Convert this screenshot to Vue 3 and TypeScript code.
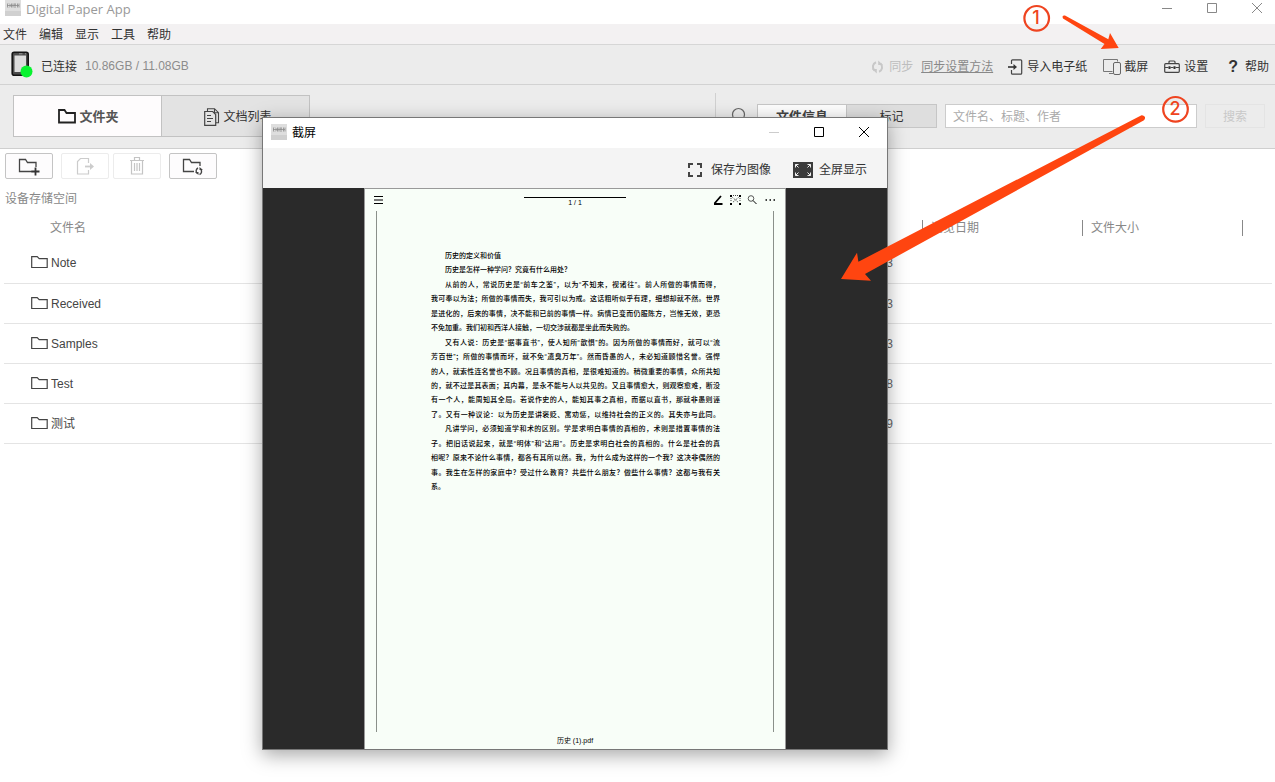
<script setup lang="ts">
import { ref } from 'vue'

interface FolderRow {
  name: string
  date: string
}

interface DocLine {
  text: string
  indent?: boolean
  full?: boolean
}

const menus: string[] = ['文件', '编辑', '显示', '工具', '帮助']
const query = ref('')

const rows: FolderRow[] = [
  { name: 'Note', date: '2019/03/13' },
  { name: 'Received', date: '2019/03/13' },
  { name: 'Samples', date: '2019/03/13' },
  { name: 'Test', date: '2019/03/18' },
  { name: '测试', date: '2019/03/19' },
]

const lines: DocLine[] = [
  { text: '历史的定义和价值', indent: true },
  { text: '历史是怎样一种学问？究竟有什么用处？', indent: true },
  { text: '从前的人，常说历史是“前车之鉴”，以为“不知来，视诸往”。前人所做的事情而得，', indent: true, full: true },
  { text: '我可奉以为法；所做的事情而失，我可引以为戒。这话粗听似乎有理，细想却就不然。世界', full: true },
  { text: '是进化的，后来的事情，决不能和已前的事情一样。病情已变而仍服陈方，岂惟无效，更恐', full: true },
  { text: '不免加重。我们初和西洋人接触，一切交涉就都是坐此而失败的。' },
  { text: '又有人说：历史是“据事直书”，使人知所“歆惧”的。因为所做的事情而好，就可以“流', indent: true, full: true },
  { text: '芳百世”；所做的事情而坏，就不免“遗臭万年”。然而昏愚的人，未必知道顾惜名誉。强悍', full: true },
  { text: '的人，就索性连名誉也不顾。况且事情的真相，是很难知道的。稍微重要的事情，众所共知', full: true },
  { text: '的，就不过是其表面；其内幕，是永不能与人以共见的。又且事情愈大，则观察愈难，断没', full: true },
  { text: '有一个人，能周知其全局。若说作史的人，能知其事之真相，而据以直书，那就非愚则诬', full: true },
  { text: '了。又有一种议论：以为历史是讲褒贬、寓劝惩，以维持社会的正义的。其失亦与此同。', full: true },
  { text: '凡讲学问，必须知道学和术的区别。学是求明白事情的真相的，术则是措置事情的法', indent: true, full: true },
  { text: '子。把旧话说起来，就是“明体”和“达用”。历史是求明白社会的真相的。什么是社会的真', full: true },
  { text: '相呢？原来不论什么事情，都各有其所以然。我，为什么成为这样的一个我？这决非偶然的', full: true },
  { text: '事。我生在怎样的家庭中？受过什么教育？共些什么朋友？做些什么事情？这都与我有关', full: true },
  { text: '系。' },
]
</script>

<template>
  <div class="app">
    <header class="titlebar">
      <svg class="app-icon" width="16" height="16" viewBox="0 0 16 16" aria-hidden="true">
        <rect width="16" height="16" fill="#dedede" />
        <rect y="11" width="16" height="5" fill="#d0d0d0" />
        <path d="M2.5 3.500v4M4 3.500l1 1v2l-1 1M6.500 3.500v4M8 3.500v4M10 3v5M9 5h2M12.500 3.500v4M14 3.500v4M2 5.500h12" fill="none" stroke="#8c8c8c" stroke-width=".8" />
      </svg>
      <h1>Digital Paper App</h1>
      <div class="win-buttons">
        <button type="button" aria-label="最小化"><svg width="12" height="12" viewBox="0 0 12 12"><path d="M1 6.500h10" /></svg></button>
        <button type="button" aria-label="最大化"><svg width="12" height="12" viewBox="0 0 12 12"><path d="M1.500 1.500h9v9h-9z" /></svg></button>
        <button type="button" aria-label="关闭"><svg width="12" height="12" viewBox="0 0 12 12"><path d="M1 1l10 10M11 1L1 11" /></svg></button>
      </div>
    </header>

    <nav class="menubar">
      <button v-for="m in menus" :key="m" type="button">{{ m }}</button>
    </nav>

    <section class="devicebar">
      <svg class="device-icon" width="22" height="28" viewBox="0 0 22 28" aria-hidden="true">
        <rect x="1.200" y="1.200" width="16" height="23" rx="2" fill="#4b4b4b" stroke="#141414" stroke-width="1.600" />
        <rect x="3.500" y="4.500" width="11.500" height="16.500" fill="#dcdcdc" />
        <path d="M8 2.800h3.500M14 2.800h1" stroke="#9a9a9a" />
        <circle cx="15.500" cy="20.500" r="6" fill="#08f22f" />
      </svg>
      <span class="device-state">已连接</span>
      <span class="device-space">10.86GB / 11.08GB</span>
      <div class="actions">
        <button type="button" class="sync" disabled>
          <svg width="14" height="14" viewBox="0 0 14 14" aria-hidden="true">
            <path d="M5 2.200A5 5 0 0 0 3.500 10.500M8 11.800A5 5 0 0 0 9.500 3.500" fill="none" stroke="#c8c8c8" stroke-width="2" />
            <path d="M1 9h4.800v4.500zM12 5H7.200V.5z" fill="#c8c8c8" />
          </svg>同步
        </button>
        <a href="#" class="sync-help">同步设置方法</a>
        <button type="button" class="import">
          <svg width="15" height="16" viewBox="0 0 15 16" aria-hidden="true">
            <path d="M3.500 5V1.800q0-1 1-1h8.200q1 0 1 1v12.400q0 1-1 1H4.500q-1 0-1-1V11" fill="none" stroke="#444" stroke-width="1.200" />
            <path d="M0 8h7" stroke="#333" stroke-width="1.600" /><path d="M5.500 5L9 8l-3.500 3z" fill="#333" />
          </svg>导入电子纸
        </button>
        <button type="button" class="shot">
          <svg width="19" height="18" viewBox="0 0 19 18" aria-hidden="true">
            <path d="M14.500 3.500V1.500H.5v12h9M6 15.500h4" fill="none" stroke="#777" />
            <rect x="10.500" y="4.500" width="7" height="12" rx="1.500" fill="none" stroke="#666" />
          </svg>截屏
        </button>
        <button type="button" class="settings">
          <svg width="16" height="14" viewBox="0 0 16 14" aria-hidden="true">
            <path d="M5 3.500V2q0-1 1-1h4q1 0 1 1v1.500M1.700 3.700h12.600q1 0 1 1v6.600q0 1-1 1H1.700q-1 0-1-1V4.700q0-1 1-1zM.7 7.500h3.800M6.500 7.500h3M11.500 7.500h3.800" fill="none" stroke="#444" stroke-width="1.200" />
            <path d="M4.500 6.200h2v2.800h-2zM9.500 6.200h2v2.800h-2z" fill="#333" />
          </svg>设置
        </button>
        <button type="button" class="help"><b>?</b>帮助</button>
      </div>
    </section>

    <section class="navbar">
      <div class="tabs">
        <button type="button" class="tab active">
          <svg width="18" height="15" viewBox="0 0 18 15" aria-hidden="true"><path d="M1 1h5.500l2 3H17v9.500H1z" fill="none" stroke="#222" stroke-width="1.800" /></svg>文件夹
        </button>
        <button type="button" class="tab">
          <svg width="16" height="18" viewBox="0 0 16 18" aria-hidden="true">
            <path d="M3.500 3V.7h7l4 4v10H12M10.500.7v4h4" fill="none" stroke="#444" stroke-width="1.100" />
            <path d="M.7 3.500h8l3 3v10.800H.7zM3 7.500h4M3 10.500h6M3 13.500h4" fill="#e4e4e4" stroke="#444" stroke-width="1.200" />
          </svg>文档列表
        </button>
      </div>
      <form class="search" @submit.prevent>
        <svg class="magnifier" width="18" height="18" viewBox="0 0 18 18" aria-hidden="true"><circle cx="7.500" cy="7.500" r="6" fill="none" stroke="#666" stroke-width="1.200" /><path d="M12 12l5 5" stroke="#666" stroke-width="1.500" /></svg>
        <div class="segments">
          <button type="button" class="on">文件信息</button>
          <button type="button">标记</button>
        </div>
        <input v-model="query" type="text" aria-label="搜索关键词" placeholder="文件名、标题、作者" />
        <button type="submit" class="go" disabled>搜索</button>
      </form>
    </section>

    <main>
      <div class="tools">
        <button type="button" aria-label="新建文件夹">
          <svg width="24" height="20" viewBox="0 0 24 20"><path d="M15 15.500H2.500v-12h6l2 3h8.500V11" fill="none" stroke="#444" stroke-width="1.300" /><path d="M18.500 11.500v8M14.500 15.500h8" stroke="#333" stroke-width="1.800" /></svg>
        </button>
        <button type="button" class="gap off" aria-label="移动" disabled>
          <svg width="24" height="20" viewBox="0 0 24 20"><path d="M15.500 7V2.500h-8l-3 3v12.500h11V14" fill="none" stroke="#ccc" stroke-width="1.200" /><path d="M12 10.500h6" stroke="#ccc" stroke-width="1.800" /><path d="M17 7l4 3.500-4 3.500z" fill="#ccc" /></svg>
        </button>
        <button type="button" class="off" aria-label="删除" disabled>
          <svg width="24" height="20" viewBox="0 0 24 20"><path d="M5 4.500h14M9.500 4V1.500h5V4M6.500 5v13h11V5M9.500 7v8M12 7v8M14.500 7v8" fill="none" stroke="#c4c4c4" stroke-width="1.200" /></svg>
        </button>
        <button type="button" class="gap" aria-label="刷新文件夹">
          <svg width="24" height="20" viewBox="0 0 24 20"><path d="M13 15.500H2.500v-12h6l2 3h8.500V10" fill="none" stroke="#444" stroke-width="1.300" /><path d="M17 12a3.300 3.300 0 0 0-1 5.200M18.500 18.500a3.300 3.300 0 0 0 1-5.500" fill="none" stroke="#444" stroke-width="1.400" /><path d="M14 16h3.500v3zM22 14h-3.500v-3z" fill="#444" /></svg>
        </button>
      </div>
      <p class="crumb">设备存储空间</p>
      <table>
        <thead>
          <tr>
            <th class="c-name">文件名</th>
            <th class="c-col">更新日期</th>
            <th class="c-col"><span>浏览日期</span></th>
            <th class="c-col"><span>文件大小</span></th>
            <th class="c-end"><span></span></th>
          </tr>
        </thead>
        <tbody>
          <tr v-for="r in rows" :key="r.name">
            <td>
              <div class="folder">
                <svg width="17" height="16" viewBox="0 0 17 16" aria-hidden="true"><path d="M.7 1.700h5.500l2 2h8v8.800H.7z" fill="none" stroke="#444" stroke-width="1.200" /></svg>{{ r.name }}
              </div>
            </td>
            <td class="date">{{ r.date }}</td>
            <td></td>
            <td></td>
            <td></td>
          </tr>
        </tbody>
      </table>
    </main>

    <section class="dialog" role="dialog" aria-labelledby="dialog-title">
      <header class="dialog-title">
        <svg class="app-icon" width="16" height="16" viewBox="0 0 16 16" aria-hidden="true">
          <rect width="16" height="16" fill="#dedede" />
          <rect y="11" width="16" height="5" fill="#d0d0d0" />
          <path d="M2.500 3.500v4M4 3.500l1 1v2l-1 1M6.500 3.500v4M8 3.500v4M10 3v5M9 5h2M12.500 3.500v4M14 3.500v4M2 5.500h12" fill="none" stroke="#8c8c8c" stroke-width=".8" />
        </svg>
        <h2 id="dialog-title">截屏</h2>
        <div class="win-buttons dark">
          <button type="button" class="faint" aria-label="最小化" disabled><svg width="12" height="12" viewBox="0 0 12 12"><path d="M1 6.500h10" /></svg></button>
          <button type="button" aria-label="最大化"><svg width="12" height="12" viewBox="0 0 12 12"><path d="M1.500 1.500h9v9h-9z" /></svg></button>
          <button type="button" aria-label="关闭"><svg width="12" height="12" viewBox="0 0 12 12"><path d="M1 1l10 10M11 1L1 11" /></svg></button>
        </div>
      </header>
      <div class="dialog-tools">
        <button type="button" class="save">
          <svg width="14" height="14" viewBox="0 0 14 14" aria-hidden="true"><path d="M1 5V1h4M9 1h4v4M13 9v4H9M5 13H1V9" fill="none" stroke="#444" stroke-width="2" /></svg>保存为图像
        </button>
        <button type="button" class="full">
          <svg width="20" height="16" viewBox="0 0 20 16" aria-hidden="true">
            <rect width="20" height="16" fill="#3c3c3c" />
            <path d="M2.500 5.500v-3h3M2.500 2.500L5.500 5.500M14.500 2.500h3v3M17.500 2.500L14.500 5.500M2.500 10.500v3h3M2.500 13.500L5.500 10.500M14.500 13.500h3v-3M17.500 13.500L14.500 10.500" fill="none" stroke="#eee" />
          </svg>全屏显示
        </button>
      </div>
      <div class="stage">
        <article class="paper">
          <header class="paper-head">
            <svg width="9" height="10" viewBox="0 0 9 10" aria-hidden="true"><path d="M0 1.500h9M0 8.500h9" stroke="#000" /><path d="M0 5h9" stroke="#777" stroke-width="2" /></svg>
            <div class="page-number">1 / 1</div>
            <svg width="63" height="12" viewBox="0 0 63 12" aria-hidden="true">
              <path d="M1 10H9.500M1.500 9.500L8 2" fill="none" stroke="#000" stroke-width="1.800" />
              <path d="M17 1h2v2h-2zM26 1h2v2h-2zM17 9h2v2h-2zM26 9h2v2h-2z" fill="#000" />
              <path d="M19.500 3.500l6 5M25.500 3.500l-6 5M20 1.500h6M18 4v4M27 4v4" stroke="#444" stroke-dasharray="1 1" fill="none" />
              <circle cx="38" cy="4.500" r="2.800" fill="none" stroke="#444" stroke-width=".9" /><path d="M40 6.500l3.500 3.500" stroke="#000" />
              <path d="M52.500 6h1.500M56.500 6h1.500M60.500 6h1.500" stroke="#000" stroke-width="1.500" />
            </svg>
          </header>
          <div class="paper-body">
            <div class="doc">
              <p v-for="(l, i) in lines" :key="i" :class="{ indent: l.indent, full: l.full }">{{ l.text }}</p>
            </div>
          </div>
          <footer>历史 (1).pdf</footer>
        </article>
      </div>
    </section>

    <svg class="marks" width="1275" height="782" viewBox="0 0 1275 782" aria-hidden="true">
      <g fill="#ff4510">
        <path d="M1065 15.500L1108.300 39.300L1110 33L1118.700 48L1100.700 49L1104.500 44L1063 18.500Q1061.500 15 1065 15.500Z" />
        <path d="M1141.500 115.200L858.400 261.700L857 252.700L841 279L871 280.700L865 274L1144 120.300Q1147 116 1141.500 115.200Z" />
      </g>
      <g fill="none" stroke="#ef4420" stroke-width="2.200">
        <circle cx="1036.700" cy="18.300" r="12.300" />
        <circle cx="1175.500" cy="109.300" r="12.300" />
      </g>
      <g class="digits">
        <text x="1036" y="24">1</text>
        <text x="1175" y="115">2</text>
      </g>
    </svg>
  </div>
</template>

<style>
body {
  margin: 0;
  background: #fff;
}
</style>

<style scoped>
.app {
  position: relative;
  box-sizing: border-box;
  min-height: 100vh;
  overflow: hidden;
  font: 12px/16px "Liberation Sans", "Noto Sans CJK SC", sans-serif;
  color: #333;
  background: #fff;
}
button {
  display: flex;
  align-items: center;
  justify-content: center;
  box-sizing: border-box;
  margin: 0;
  padding: 0;
  border: 0;
  background: none;
  color: inherit;
  font: inherit;
  white-space: nowrap;
}
svg {
  display: block;
  flex: none;
}
h1, h2, p {
  margin: 0;
  font: inherit;
}
.titlebar {
  display: flex;
  align-items: flex-start;
  height: 24px;
  padding-left: 5px;
}
.titlebar h1 {
  margin-left: 5px;
  font: 13px/18px "Open Sans", sans-serif;
  color: #999;
}
.win-buttons {
  display: flex;
  margin-left: auto;
  color: #888;
}
.win-buttons button {
  width: 45px;
  height: 16px;
}
.titlebar .win-buttons {
  margin-right: -4px;
}
.win-buttons path {
  fill: none;
  stroke: currentColor;
}
.menubar {
  display: flex;
  gap: 12px;
  height: 20px;
  padding: 1px 0 0 3px;
  box-sizing: border-box;
  background: #f3f1f2;
}
.devicebar {
  display: flex;
  align-items: center;
  height: 39px;
  padding: 0 6px 0 11px;
  background: #ececec;
  border-top: 1px solid #d6d6d6;
  border-bottom: 1px solid #d2d2d2;
}
.device-state {
  margin: 4px 8px 0;
  color: #333;
}
.device-space {
  margin-top: 2px;
  color: #8c8c8c;
}
.actions {
  display: flex;
  align-items: center;
  margin: 4px 0 0 auto;
}
.actions svg {
  margin-right: 4px;
}
.sync {
  color: #bdbdbd;
}
.sync-help {
  margin-left: 8px;
  color: #888;
  white-space: nowrap;
}
.import {
  margin-left: 15px;
}
.shot, .settings {
  margin-left: 16px;
}
.actions .shot svg {
  margin-right: 2px;
}
.help {
  margin-left: 20px;
}
.help b {
  margin-right: 7px;
  font-size: 16px;
}
.navbar {
  display: flex;
  align-items: flex-start;
  justify-content: space-between;
  height: 63px;
  background: #ececec;
  border-bottom: 1px solid #cfcfcf;
}
.tabs {
  display: flex;
  margin: 10px 0 0 13px;
  border: 1px solid #c2c2c2;
}
.tab {
  width: 147px;
  height: 40px;
  padding: 1px 0 0 5px;
  background: #e3e3e3;
}
.tab svg {
  margin-right: 3px;
}
.tab.active {
  width: 148px;
  padding-left: 2px;
  background: #fefcfd;
  font-size: 13px;
  font-weight: bold;
  color: #555;
  border-right: 1px solid #c2c2c2;
}
.search {
  display: flex;
  align-items: center;
  height: 45px;
  margin: 8px 10px 0 0;
  border-left: 1px solid #d0d0d0;
}
.magnifier {
  margin: 0 8px 0 15px;
}
.segments {
  display: flex;
  border: 1px solid #c6c6c6;
}
.segments button {
  width: 89px;
  height: 22px;
  padding-top: 2px;
  background: #dedede;
}
.segments .on {
  font-size: 13px;
  font-weight: bold;
  color: #444;
  background: #fdfdfd;
  border-right: 1px solid #c6c6c6;
}
.search input {
  box-sizing: border-box;
  width: 252px;
  height: 24px;
  margin: 0 8px;
  padding: 2px 7px 0;
  border: 1px solid #ccc;
  border-radius: 0;
  background: #fff;
  font: inherit;
}
.search input::placeholder {
  color: #aaa;
}
.search .go {
  width: 60px;
  height: 24px;
  padding-top: 2px;
  border: 1px solid #e4e4e4;
  color: #c8c8c8;
}
main {
  padding: 4px 3px 0 4px;
}
.tools {
  display: flex;
  gap: 4px;
  padding-left: 1px;
}
.tools button {
  width: 48px;
  height: 26px;
  background: #fdfcfd;
  border: 1px solid #c4c4c4;
  border-radius: 2px;
}
.tools .off {
  background: #fff;
  border-color: #ececec;
}
.tools .gap {
  margin-left: 4px;
}
.crumb {
  margin: 12px 0 6px 1px;
  color: #888;
}
table {
  width: 100%;
  table-layout: fixed;
  border-collapse: collapse;
}
th {
  height: 30px;
  padding: 0;
  font-weight: normal;
  text-align: left;
  color: #888;
}
.c-name {
  padding-left: 46px;
}
.c-col {
  width: 160px;
}
.c-end {
  width: 30px;
}
th span {
  display: block;
  height: 16px;
  padding-left: 8px;
  border-left: 1px solid #888;
}
td {
  box-sizing: border-box;
  height: 40px;
  padding: 1px 0 0;
  border-bottom: 1px solid #e4e4e4;
}
.folder {
  display: flex;
  align-items: center;
  padding-left: 27px;
  color: #444;
}
.folder svg {
  margin-right: 3px;
}
td.date {
  padding-right: 29px;
  text-align: right;
  color: #666;
}
.dialog {
  position: absolute;
  top: 117px;
  right: 387px;
  bottom: 32px;
  left: 262px;
  display: flex;
  flex-direction: column;
  border: 1px solid #777;
  background: #fff;
  box-shadow: 0 5px 18px rgba(0, 0, 0, 0.35);
}
.dialog-title {
  display: flex;
  align-items: center;
  box-sizing: border-box;
  height: 30px;
  padding: 0 1px 2px 8px;
}
.dialog-title h2 {
  margin: 2px 0 0 5px;
  color: #000;
}
.dark {
  color: #000;
}
.dark .faint {
  color: #ccc;
}
.dialog-tools {
  display: flex;
  align-items: center;
  justify-content: flex-end;
  gap: 22px;
  height: 40px;
  padding: 3px 20px 0 0;
  box-sizing: border-box;
  background: #f4f4f4;
}
.save svg {
  margin-right: 9px;
}
.full svg {
  margin-right: 6px;
}
.stage {
  display: flex;
  flex: 1;
  justify-content: center;
  min-height: 0;
  background: #2a2a2a;
}
.paper {
  display: flex;
  flex-direction: column;
  box-sizing: border-box;
  aspect-ratio: 422 / 561;
  border: 1px solid #999;
  border-bottom: 0;
  background: #f8fef8;
  color: #000;
  font-size: 7px;
  line-height: 14px;
}
.paper-head {
  display: grid;
  grid-template-columns: 1fr 102px 1fr;
  align-items: center;
  height: 22px;
  padding: 0 9px;
}
.paper-head svg:last-child {
  justify-self: end;
}
.page-number {
  align-self: start;
  margin-top: 8px;
  border-top: 1px solid #000;
  line-height: 10px;
  text-align: center;
}
.paper-body {
  flex: 1;
  margin: 0 11px;
  padding: 38px 53px 0 54px;
  border: 1px solid #8a908a;
  border-width: 0 1px;
}
.doc {
  display: grid;
  align-content: space-between;
  height: 245px;
  font-weight: 500;
}
.doc p {
  white-space: nowrap;
}
.doc .indent {
  padding-left: 14px;
}
.doc .full {
  text-align: justify;
  text-align-last: justify;
}
.paper footer {
  box-sizing: border-box;
  height: 17px;
  padding-top: 2px;
  text-align: center;
}
.marks {
  position: absolute;
  top: 0;
  left: 0;
  pointer-events: none;
}
.digits {
  font: 500 18px Inter, sans-serif;
  fill: #ef4420;
  text-anchor: middle;
}
</style>
